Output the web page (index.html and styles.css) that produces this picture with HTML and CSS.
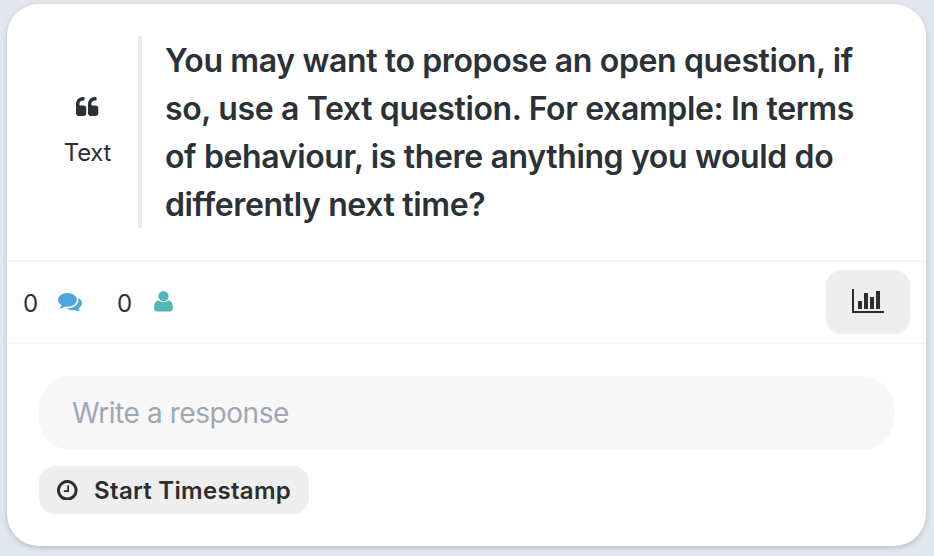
FILE: index.html
```
<!DOCTYPE html>
<html lang="en">
<head>
  <meta charset="UTF-8">
  <meta name="viewport" content="width=device-width, initial-scale=1.0">
  <title>Text question</title>
  <link rel="stylesheet" href="styles.css">
</head>
<body>
  <div class="card">
    <div class="question">
      <div class="question-type">
        <svg class="icon-quote" viewBox="64 128 1664 1408"><path d="M832 960v384q0 80-56 136t-136 56h-384q-80 0-136-56t-56-136v-704q0-104 40.5-198.5t109.5-163.5 163.5-109.5 198.5-40.5h64q26 0 45 19t19 45v128q0 26-19 45t-45 19h-64q-106 0-181 75t-75 181v32q0 40 28 68t68 28h224q80 0 136 56t56 136zm896 0v384q0 80-56 136t-136 56h-384q-80 0-136-56t-56-136v-704q0-104 40.5-198.5t109.5-163.5 163.5-109.5 198.5-40.5h64q26 0 45 19t19 45v128q0 26-19 45t-45 19h-64q-106 0-181 75t-75 181v32q0 40 28 68t68 28h224q80 0 136 56t56 136z"/></svg>
        <span>Text</span>
      </div>
      <h2 class="question-text">You may want to propose an open question, if so, use a Text question. For example: In terms of behaviour, is there anything you would do differently next time?</h2>
    </div>

    <div class="stats">
      <span class="count">0</span>
      <svg class="icon-comments" viewBox="0 256 1792 1408"><path d="M1408 768q0 139-94 257t-256.5 186.5-353.5 68.5q-86 0-176-16-124 88-278 128-36 9-86 16h-3q-11 0-20.5-8t-11.5-21q-1-3-1-6.5t.5-6.5 2-6l2.5-5 3.5-5.5 4-5 4.5-5 4-4.5q5-6 23-25t26-29.5 22.5-29 25-38.5 20.5-44q-124-72-195-177t-71-224q0-139 94-257t256.5-186.5 353.5-68.5 353.5 68.5 256.5 186.5 94 257zm384 256q0 120-71 224.5t-195 176.5q10 24 20.5 44t25 38.5 22.5 29 26 29.5 23 25q1 1 4 4.5t4.5 5 4 5 3.5 5.5l2.5 5 2 6 .5 6.5-1 6.5q-3 14-13 22t-22 7q-50-7-86-16-154-40-278-128-90 16-176 16-271 0-472-132 58 4 88 4 161 0 309-45t264-129q125-92 192-212t67-254q0-77-23-152 129 71 204 178t75 230z"/></svg>
      <span class="count count-users">0</span>
      <svg class="icon-user" viewBox="192 128 1408 1536"><path d="M1600 1405q0 120-73 189.5t-194 69.5h-874q-121 0-194-69.5t-73-189.5q0-53 3.5-103.5t14-109 26.5-108.5 43-97.5 62-81 85.5-53.5 111.5-20q9 0 42 21.5t74.5 48 108 48 133.5 21.5 133.5-21.5 108-48 74.5-48 42-21.5q61 0 111.5 20t85.5 53.5 62 81 43 97.5 26.5 108.5 14 109 3.5 103.5zm-320-893q0 159-112.5 271.5t-271.5 112.5-271.5-112.5-112.5-271.5 112.5-271.5 271.5-112.5 271.5 112.5 112.5 271.5z"/></svg>
      <button class="chart-button" aria-label="Show results">
        <svg class="icon-chart" viewBox="0 0 32 24"><path d="M0 0h2v22h30v2H0zM6 12h4v8H6zM12 4h4v16h-4zM18 8h4v12h-4zM24 2h4v18h-4z"/></svg>
      </button>
    </div>

    <div class="answer">
      <input class="response" type="text" placeholder="Write a response">
      <button class="timestamp">
        <svg class="icon-clock" viewBox="128 128 1536 1536"><path d="M1024 544v448q0 14-9 23t-23 9h-320q-14 0-23-9t-9-23v-64q0-14 9-23t23-9h224v-352q0-14 9-23t23-9h64q14 0 23 9t9 23zm416 352q0-148-73-273t-198-198-273-73-273 73-198 198-73 273 73 273 198 198 273 73 273-73 198-198 73-273zm224 0q0 209-103 385.5t-279.5 279.5-385.5 103-385.5-103-279.5-279.5-103-385.5 103-385.5 279.5-279.5 385.5-103 385.5 103 279.5 279.5 103 385.5z"/></svg>
        <span>Start Timestamp</span>
      </button>
    </div>
  </div>
</body>
</html>
```
FILE: styles.css
```
* {
  box-sizing: border-box;
}
body {
  margin: 0;
  padding: 4px 8px 10px 7px;
  height: 556px;
  background-color: #e2e7ef;
  font-family: Inter, "Liberation Sans", sans-serif;
  color: #2a3238;
}
svg {
  display: block;
  flex: none;
  fill: currentColor;
}
button {
  border: none;
  background-color: #eeeeee;
  color: #2d2d2d;
  font-family: inherit;
  cursor: pointer;
}
.card {
  height: 542px;
  background-color: #fff;
  border-radius: 32px;
  box-shadow: 0 2px 6px rgba(0, 0, 0, 0.12), 0 2px 4px rgba(0, 0, 0, 0.06);
}
.question {
  display: flex;
  height: 256px;
  padding: 32px;
}
.question-type {
  display: flex;
  flex-direction: column;
  align-items: center;
  width: 103px;
  padding: 61px 2px 0 0;
  border-right: 4px solid #e8eaec;
  font-size: 24px;
  line-height: 36px;
  letter-spacing: -0.3px;
}
.question-type span {
  margin-top: 19px;
}
.icon-quote {
  width: 22.3px;
  height: 18.9px;
}
.question-text {
  flex: 1;
  margin: 0;
  padding: 1px 16px 0 23px;
  font-size: 32px;
  font-weight: 600;
  line-height: 48px;
  letter-spacing: -0.36px;
}
.stats {
  display: flex;
  align-items: center;
  height: 84px;
  padding: 0 16px;
  border-top: 2px solid #f2f5f9;
  border-bottom: 2px solid #f2f5f9;
}
.count {
  width: 15px;
  margin-right: 20px;
  padding-top: 2px;
  font-size: 24px;
}
.count-users {
  margin-left: 35px;
  margin-right: 22px;
}
.icon-comments {
  width: 24px;
  height: 18.9px;
  color: #4ba6df;
}
.icon-user {
  width: 18.9px;
  height: 20.6px;
  margin-bottom: 1px;
  color: #52b5b8;
}
.icon-chart {
  width: 32px;
  height: 24px;
}
.chart-button {
  display: flex;
  align-items: center;
  justify-content: center;
  width: 84px;
  height: 64px;
  margin-left: auto;
  padding: 0 0 2px;
  border-radius: 16px;
}
.answer {
  padding: 32px;
}
.response {
  display: block;
  width: 855px;
  height: 74px;
  padding: 0 33px;
  border: none;
  border-radius: 32px;
  background-color: #f7f7f7;
  font-family: inherit;
  font-size: 28px;
  letter-spacing: -0.43px;
}
.response::placeholder {
  color: #a0a7b4;
}
.timestamp {
  display: flex;
  align-items: center;
  width: 270px;
  height: 48px;
  margin-top: 16px;
  padding: 0 18px;
  border-radius: 16px;
  font-size: 24px;
  font-weight: 600;
  letter-spacing: 0.3px;
  white-space: nowrap;
}
.timestamp span {
  margin-left: 16.5px;
}
.icon-clock {
  width: 20.6px;
  height: 20.6px;
}
```
